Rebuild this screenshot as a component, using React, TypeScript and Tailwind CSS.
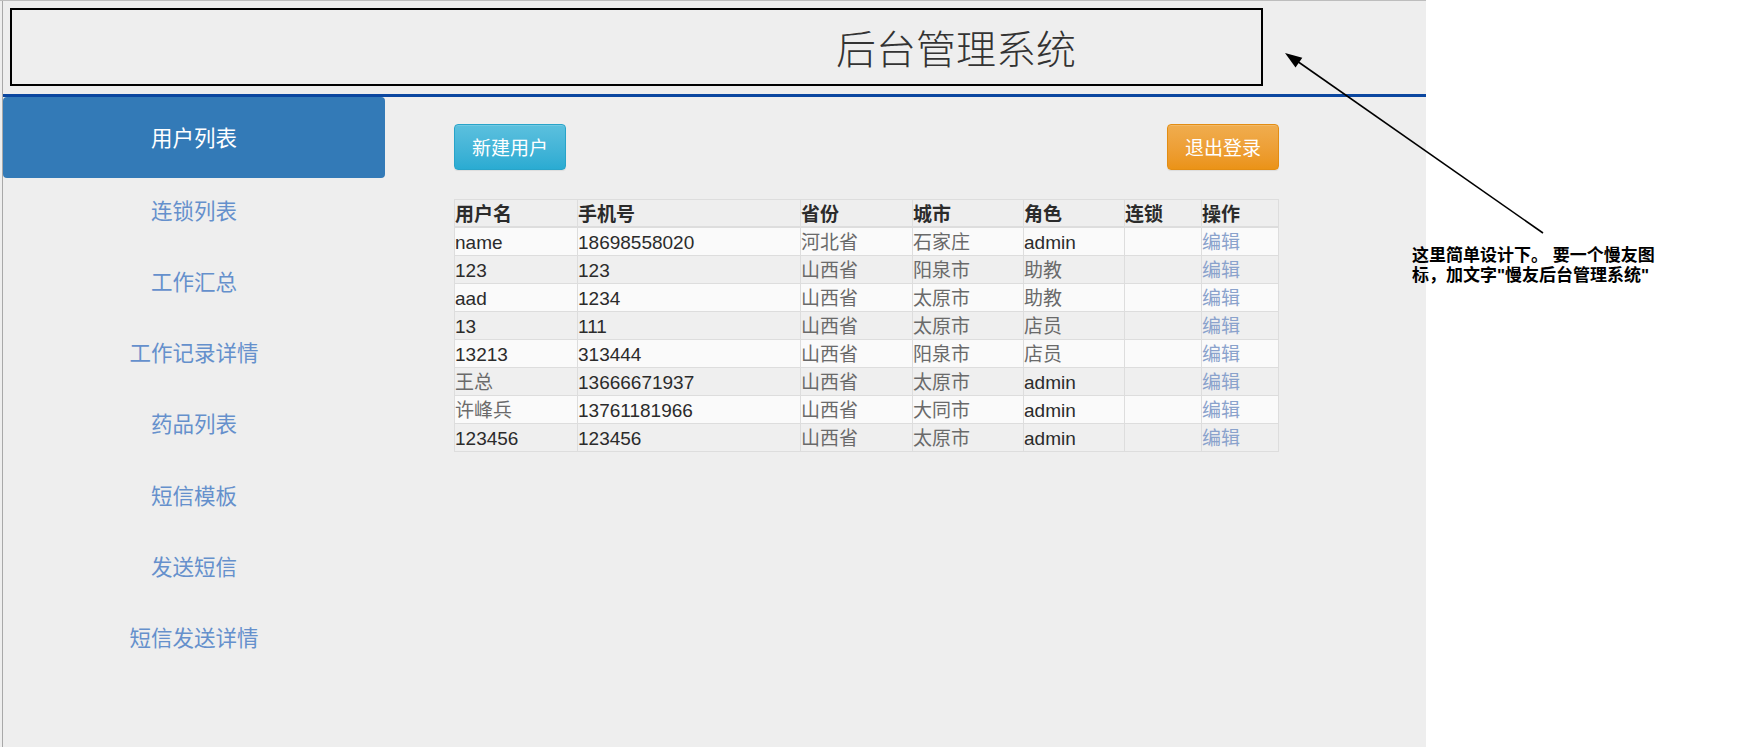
import React from 'react';

const NAV = ['用户列表', '连锁列表', '工作汇总', '工作记录详情', '药品列表', '短信模板', '发送短信', '短信发送详情'];

const COLUMNS = ['用户名', '手机号', '省份', '城市', '角色', '连锁', '操作'];

const USERS = [
  { name: 'name', phone: '18698558020', province: '河北省', city: '石家庄', role: 'admin' },
  { name: '123', phone: '123', province: '山西省', city: '阳泉市', role: '助教' },
  { name: 'aad', phone: '1234', province: '山西省', city: '太原市', role: '助教' },
  { name: '13', phone: '111', province: '山西省', city: '太原市', role: '店员' },
  { name: '13213', phone: '313444', province: '山西省', city: '阳泉市', role: '店员' },
  { name: '王总', phone: '13666671937', province: '山西省', city: '太原市', role: 'admin' },
  { name: '许峰兵', phone: '13761181966', province: '山西省', city: '大同市', role: 'admin' },
  { name: '123456', phone: '123456', province: '山西省', city: '太原市', role: 'admin' },
];

const hasCjk = (s: string) => /[\u4e00-\u9fff]/.test(s);

function Cell({ text, last }: { text: string; last?: boolean }) {
  // chinese text in the body renders lighter than the latin text
  const color = last ? 'text-[#8aa2cc]' : hasCjk(text) ? 'text-[#6a6a6a]' : 'text-[#2b2b2b]';
  return (
    <div className={`h-[28px] flex items-center pt-[3px] border-r border-b border-[#dddddd] overflow-hidden whitespace-nowrap ${color}`}>
      {text}
    </div>
  );
}

function UserTable() {
  return (
    <div className="grid grid-cols-[123px_223px_112px_111px_101px_77px_77px] border-t border-l border-[#dddddd] text-[19px] font-['Liberation_Sans','Noto_Sans_CJK_SC',sans-serif]">
      {COLUMNS.map((c) => (
        <div key={c} className="h-[28px] flex items-center border-r border-b-2 border-[#dddddd] bg-[#eeeeee] font-bold text-[#2b2b2b] font-['Noto_Sans_CJK_SC',sans-serif]">
          {c}
        </div>
      ))}
      {USERS.map((u, i) => (
        <div key={i} className={`contents ${i % 2 === 0 ? '[&>div]:bg-[#fafafa]' : '[&>div]:bg-[#efefef]'}`}>
          <Cell text={u.name} />
          <Cell text={u.phone} />
          <Cell text={u.province} />
          <Cell text={u.city} />
          <Cell text={u.role} />
          <Cell text="" />
          <Cell text="编辑" last />
        </div>
      ))}
    </div>
  );
}

export default function App() {
  return (
    <div className="relative w-[1758px] h-[755px] bg-white overflow-hidden font-['Noto_Sans_CJK_SC',sans-serif]">
      <div className="w-[1426px] h-[747px] bg-[#eeeeee] border-t border-[#bdbdbd]">
        <div className="ml-[2px] h-full border-l border-[#a8a8a8] flex flex-col">
          {/* header */}
          <div className="pt-[7px] pl-[7px]">
            <div className="w-[1253px] h-[78px] border-2 border-black flex items-center pl-[824px]">
              <span className="text-[40px] leading-none text-[#333333] font-light">后台管理系统</span>
            </div>
          </div>
          <div className="mt-[8px] h-[3px] bg-[#0b47a0]" />

          <div className="flex flex-1">
            {/* sidebar */}
            <nav className="w-[382px] flex flex-col text-[21.5px]">
              <div className="h-[81px] flex items-center justify-center rounded-[4px] bg-[#337ab7] text-white">
                {NAV[0]}
              </div>
              <div className="-mt-[4px] flex flex-col">
                {NAV.slice(1).map((item) => (
                  <div key={item} className="h-[71.3px] flex items-center justify-center text-[#6590cc]">
                    {item}
                  </div>
                ))}
              </div>
            </nav>

            {/* main */}
            <main className="pl-[69px] pt-[27px]">
              <div className="w-[825px] flex justify-between">
                <button className="w-[112px] h-[46px] rounded-[4px] border border-[#28a4c9] bg-gradient-to-b from-[#5bc0de] to-[#2aabd2] text-white text-[19px] shadow-[inset_0_1px_0_rgba(255,255,255,0.15),0_1px_1px_rgba(0,0,0,0.075)]">
                  新建用户
                </button>
                <button className="w-[112px] h-[46px] rounded-[4px] border border-[#e38d13] bg-gradient-to-b from-[#f0ad4e] to-[#eb9316] text-white text-[19px] shadow-[inset_0_1px_0_rgba(255,255,255,0.15),0_1px_1px_rgba(0,0,0,0.075)]">
                  退出登录
                </button>
              </div>
              <div className="mt-[29px] w-[825px]">
                <UserTable />
              </div>
            </main>
          </div>
        </div>
      </div>

      {/* annotation arrow */}
      <svg className="absolute left-0 top-0 pointer-events-none" width="1758" height="755">
        <line x1="1543" y1="233" x2="1297" y2="61" stroke="#000" strokeWidth="1.6" />
        <polygon points="1285,53 1302.3,57.8 1295.5,67.6" fill="#000" />
      </svg>
      <div className="absolute left-[1412px] top-[246px] text-[17px] leading-[20px] font-bold text-black whitespace-nowrap font-['Liberation_Sans','Noto_Sans_CJK_SC',sans-serif]">
        <div>这里简单设计下。 要一个慢友图</div>
        <div>标，加文字{'"'}慢友后台管理系统{'"'}</div>
      </div>
    </div>
  );
}
